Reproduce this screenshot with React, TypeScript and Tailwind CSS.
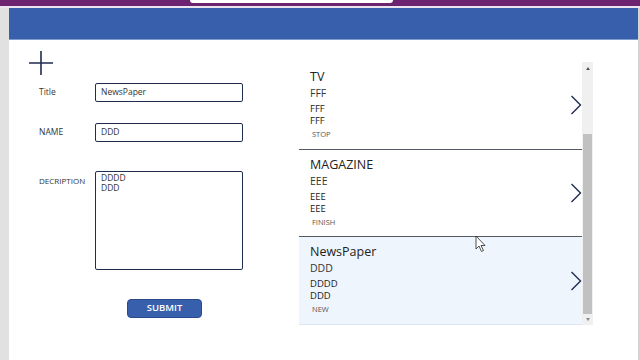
import React from "react";

const items = [
  { title: "TV", name: "FFF", desc: ["FFF", "FFF"], status: "STOP", selected: false },
  { title: "MAGAZINE", name: "EEE", desc: ["EEE", "EEE"], status: "FINISH", selected: false },
  { title: "NewsPaper", name: "DDD", desc: ["DDDD", "DDD"], status: "NEW", selected: true },
];

function Chevron() {
  return (
    <svg width="12" height="20" viewBox="0 0 12 20" className="shrink-0">
      <path d="M1.5 1 L10.5 10 L1.5 19" fill="none" stroke="#1f2d4f" strokeWidth="1.4" />
    </svg>
  );
}

export default function App() {
  return (
    <div className="w-[640px] h-[360px] overflow-hidden bg-white relative flex flex-col" style={{ fontFamily: '"Open Sans", "Noto Sans", sans-serif' }}>
      {/* Host app bar */}
      <div className="h-[6px] bg-[#6c2470] flex shrink-0">
        <div className="ml-[190px] w-[203px] h-[3px] bg-white rounded-b-sm" />
      </div>
      <div className="h-[2px] bg-[#ece4ee] shrink-0" />

      <div className="flex flex-1 min-h-0">
        <div className="w-[9px] bg-[#e1e1e1] shrink-0" />

        <div className="flex-1 flex flex-col min-w-0">
          {/* Header */}
          <div className="h-[32px] bg-[#385fac] border-b border-[#7f9bcc] shrink-0" />

          <div className="flex flex-1">
            {/* Form */}
            <div className="w-[290px] shrink-0 flex flex-col">
              <div className="pl-[20px] pt-[11px]">
                <svg width="24" height="24" viewBox="0 0 24 24">
                  <path d="M12 0 V24 M0 12 H24" stroke="#1f2d4f" strokeWidth="1.6" />
                </svg>
              </div>

              <div className="pl-[30px] mt-[8px] flex items-center">
                <span className="w-[56px] text-[8.5px] text-[#333]">Title</span>
                <div className="w-[148px] h-[19px] border border-[#1f2d4f] rounded-[2px] px-[5px] flex items-center text-[8.5px] text-[#333]">NewsPaper</div>
              </div>

              <div className="pl-[30px] mt-[21px] flex items-center">
                <span className="w-[56px] text-[8.5px] text-[#333]">NAME</span>
                <div className="w-[148px] h-[19px] border border-[#1f2d4f] rounded-[2px] px-[5px] flex items-center text-[8.5px] text-[#333]">DDD</div>
              </div>

              <div className="pl-[30px] mt-[29px] flex items-start">
                <span className="w-[56px] pt-[4px] text-[8px] text-[#333]">DECRIPTION</span>
                <div className="w-[148px] h-[99px] border border-[#1f2d4f] rounded-[2px] px-[5px] pt-[1px] text-[8.5px] leading-[10px] text-[#333]">
                  <div>DDDD</div>
                  <div>DDD</div>
                </div>
              </div>

              <div className="pl-[118px] mt-[29px]">
                <button className="w-[75px] h-[19px] bg-[#385fac] border border-[#2a4a8c] rounded-[4px] text-white text-[9.5px] font-semibold flex items-center justify-center">
                  SUBMIT
                </button>
              </div>
            </div>

            {/* Gallery */}
            <div className="mt-[22px] flex h-[263px]">
              <div className="w-[283px] flex flex-col">
                {items.map((it, i) => (
                  <div
                    key={it.title}
                    className={`h-[88px] pl-[11px] flex items-center ${i < 2 ? "border-b border-[#555b66]" : "border-b border-[#dde6f2]"} ${it.selected ? "bg-[#eef5fd]" : "bg-white"}`}
                  >
                    <div className="flex-1 flex flex-col self-start pt-[7px] text-[#222]">
                      <div className="text-[12.5px] leading-[16px] font-medium">{it.title}</div>
                      <div className="text-[10.5px] leading-[14px] mt-[1px] text-[#333]">{it.name}</div>
                      <div className="text-[9.5px] leading-[12px] mt-[3px] text-[#222]">
                        {it.desc.map((d, j) => (
                          <div key={j}>{d}</div>
                        ))}
                      </div>
                      <div className="text-[7.5px] leading-[10px] mt-[2px] pl-[2px] text-[#555]">{it.status}</div>
                    </div>
                    <Chevron />
                  </div>
                ))}
              </div>
              {/* Scrollbar */}
              <div className="w-[11px] bg-[#f0f0f0] flex flex-col items-center">
                <div className="h-[12px] flex items-center justify-center">
                  <div className="w-0 h-0 border-l-[2.5px] border-r-[2.5px] border-b-[3px] border-l-transparent border-r-transparent border-b-[#555]" />
                </div>
                <div className="h-[60px]" />
                <div className="w-[9px] h-[180px] bg-[#c1c1c1]" />
                <div className="flex-1 flex items-center justify-center">
                  <div className="w-0 h-0 border-l-[2.5px] border-r-[2.5px] border-t-[3px] border-l-transparent border-r-transparent border-t-[#888]" />
                </div>
              </div>
            </div>
          </div>
        </div>

        <div className="w-[2px] bg-[#d4d4d4] shrink-0" />
      </div>

      {/* Mouse cursor */}
      <svg className="absolute left-[475px] top-[235px]" width="12" height="18" viewBox="0 0 12 18">
        <path d="M1 1 V14 L4 11 L6.5 16.5 L8.5 15.5 L6 10.5 H10 Z" fill="white" stroke="#222" strokeWidth="0.8" />
      </svg>
    </div>
  );
}
